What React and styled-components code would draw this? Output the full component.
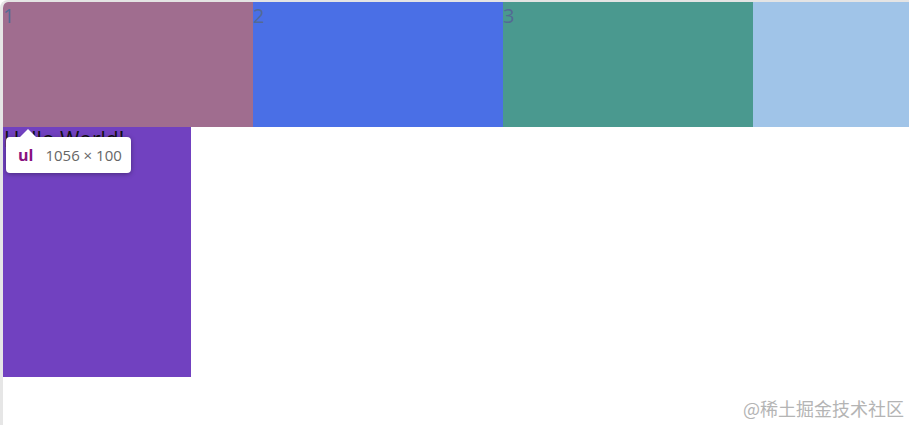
import React from 'react';
import styled, { createGlobalStyle } from 'styled-components';

const GlobalStyle = createGlobalStyle`
  html, body {
    margin: 0;
    padding: 0;
    background: #ffffff;
    overflow: hidden;
  }
  body {
    font-family: "Open Sans", "Noto Sans", "Liberation Sans", sans-serif;
  }
`;

const Frame = styled.div`
  position: relative;
  width: 909px;
  height: 425px;
  box-sizing: border-box;
  border-top: 2px solid #e4e4e4;
  border-left: 3px solid #e6e6e6;
  border-top-left-radius: 8px;
  overflow: hidden;
  background: #fff;
`;

const List = styled.ul`
  display: flex;
  margin: 0;
  padding: 0;
  list-style: none;
  height: 125px;
  width: 1320px;
`;

const Item = styled.li`
  flex: 0 0 250px;
  height: 125px;
  background: ${p => p.$bg};
  color: #536a95;
  font-size: 20px;
  line-height: 28px;
`;

const Block = styled.div`
  width: 188px;
  height: 250px;
  background: #7141c0;
  color: #111;
  font-size: 21px;
  line-height: 24px;
  padding-left: 1px;
  box-sizing: border-box;
`;

const Tip = styled.div`
  position: absolute;
  left: 3px;
  top: 135px;
  width: 125px;
  height: 36px;
  background: #fff;
  border-radius: 4px;
  box-shadow: 0 1px 5px rgba(0, 0, 0, 0.35);
  display: flex;
  align-items: center;
  gap: 12px;
  padding-left: 12px;
  box-sizing: border-box;
  font-size: 15px;

  &::before {
    content: '';
    position: absolute;
    left: 14px;
    top: -8px;
    border-left: 8px solid transparent;
    border-right: 8px solid transparent;
    border-bottom: 8px solid #fff;
  }
`;

const Tag = styled.span`
  color: #881280;
  font-weight: 700;
  font-size: 16px;
`;

const Size = styled.span`
  color: #666;
`;

const Mark = styled.div`
  position: absolute;
  right: 5px;
  bottom: 4px;
  color: #b4b4b4;
  font-size: 18px;
  font-family: "Noto Sans CJK SC", "Noto Sans", sans-serif;
`;

const items = [
  { n: '1', bg: '#a06d8f' },
  { n: '2', bg: '#4a6fe6' },
  { n: '3', bg: '#4a998f' },
  { n: '', bg: '#a0c4e8' },
];

export default function App() {
  return (
    <>
      <GlobalStyle />
      <Frame>
        <List>
          {items.map((it, i) => (
            <Item key={i} $bg={it.bg}>{it.n}</Item>
          ))}
        </List>
        <Block>Hello World!</Block>
        <Tip>
          <Tag>ul</Tag>
          <Size>1056 × 100</Size>
        </Tip>
        <Mark>@稀土掘金技术社区</Mark>
      </Frame>
    </>
  );
}
